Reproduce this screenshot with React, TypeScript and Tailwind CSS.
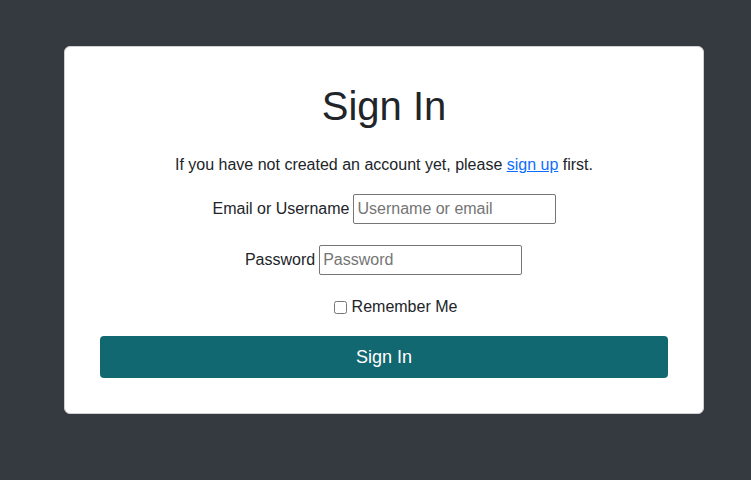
import React from "react";

export default function App() {
  return (
    <div className="min-h-[480px] w-full bg-[#343a40] pt-[46px] text-[#212529]" style={{ fontFamily: '"Liberation Sans", Arial, sans-serif' }}>
      <div className="ml-[64px] w-[640px] rounded-[6px] border border-[#d0d0d0] bg-white px-[35px] pt-[35px] pb-[35px]">
        <h1 className="text-center text-[40px] leading-[48px] font-normal">Sign In</h1>
        <p className="mt-[23px] text-center text-[16px] leading-[24px]">
          If you have not created an account yet, please{" "}
          <a href="#" className="text-[#0d6efd] underline">sign up</a> first.
        </p>
        <div className="mt-[17px] flex items-center justify-center pl-[1px] text-[16px]">
          <label className="mr-[4px]">Email or Username</label>
          <input
            type="text"
            placeholder="Username or email"
            className="h-[30px] w-[203px] rounded-[2px] border border-[#767676] px-[3px] text-[16px] placeholder:text-[#757575] outline-none"
          />
        </div>
        <div className="mt-[21px] flex items-center justify-center pr-[1px] text-[16px]">
          <label className="mr-[4px]">Password</label>
          <input
            type="password"
            placeholder="Password"
            className="h-[30px] w-[203px] rounded-[2px] border border-[#767676] px-[3px] text-[16px] placeholder:text-[#757575] outline-none"
          />
        </div>
        <div className="mt-[20px] flex items-center justify-center pl-[23px] text-[16px] leading-[24px]">
          <input type="checkbox" className="mr-[5px] h-[13px] w-[13px]" />
          <label>Remember Me</label>
        </div>
        <button className="mt-[17px] h-[42px] w-full rounded-[4px] bg-[#126870] text-[18px] text-white">
          Sign In
        </button>
      </div>
    </div>
  );
}
